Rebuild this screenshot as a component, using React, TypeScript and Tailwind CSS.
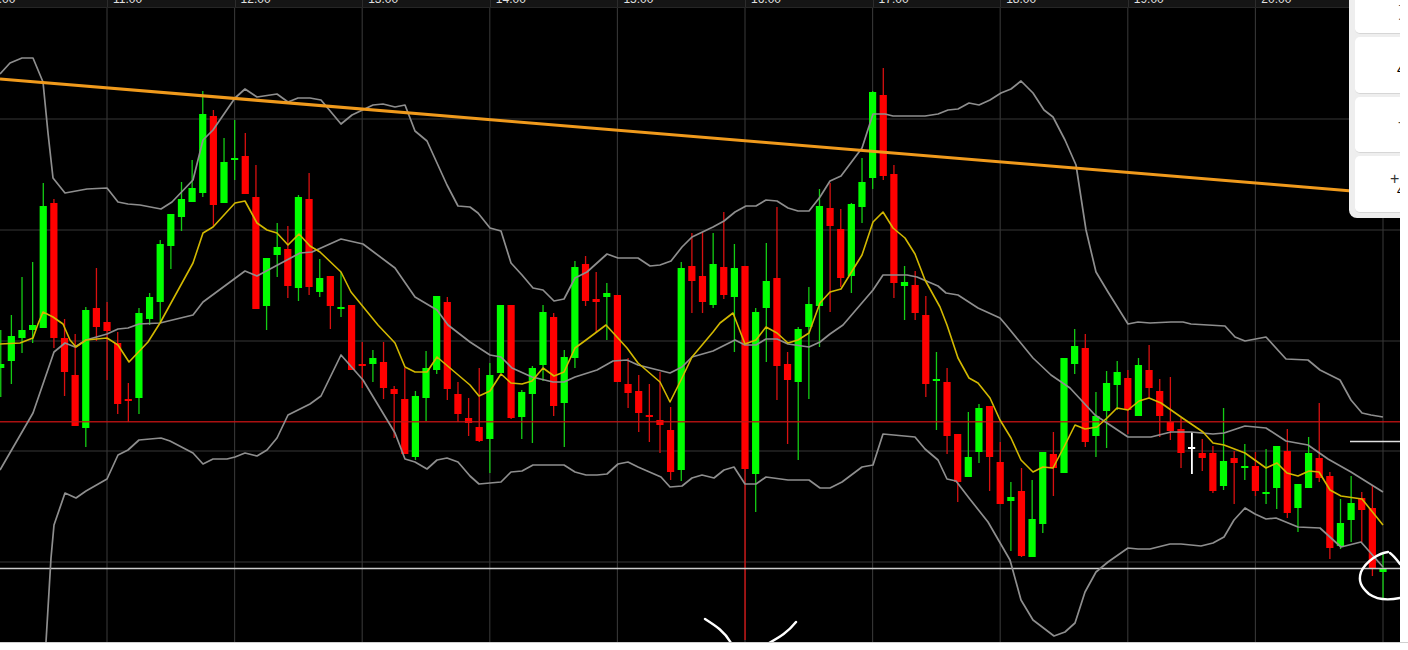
const HOURS = ['10:00', '11:00', '12:00', '13:00', '14:00', '15:00', '16:00', '17:00', '18:00', '19:00', '20:00'];

const STEP = 10.633;
const X0 = 0.7;

// high, body top, body bottom, low, colour (one entry per 5 min bar)
type Bar = [number, number, number, number, 'g' | 'r' | 'w'];
const BARS: Bar[] = [
  [330, 364, 368, 397, 'g'], [315, 336, 361, 384, 'g'], [277, 330, 338, 353, 'g'], [262, 325, 330, 343, 'g'],
  [183, 206, 328, 328, 'g'], [199, 203, 338, 348, 'r'], [319, 338, 372, 396, 'r'], [334, 375, 426, 426, 'r'],
  [307, 310, 428, 447, 'g'], [268, 308, 327, 341, 'r'], [302, 322, 331, 380, 'r'], [332, 343, 404, 414, 'r'],
  [383, 399, 401, 422, 'r'], [308, 313, 398, 414, 'g'], [293, 297, 319, 325, 'g'], [240, 244, 302, 322, 'g'],
  [214, 214, 246, 269, 'g'], [182, 199, 217, 231, 'g'], [160, 188, 202, 202, 'g'], [91, 114, 193, 197, 'g'],
  [110, 116, 205, 227, 'r'], [138, 162, 203, 203, 'g'], [120, 158, 160, 180, 'g'], [133, 156, 194, 194, 'r'],
  [165, 197, 309, 309, 'r'], [258, 258, 306, 330, 'g'], [223, 247, 255, 277, 'g'], [226, 249, 286, 298, 'r'],
  [195, 197, 288, 301, 'g'], [173, 199, 287, 295, 'r'], [259, 278, 292, 297, 'g'], [276, 276, 306, 329, 'r'],
  [272, 307, 309, 317, 'g'], [305, 305, 370, 370, 'r'], [342, 364, 366, 388, 'r'], [350, 358, 364, 382, 'g'],
  [342, 362, 388, 399, 'r'], [386, 389, 394, 438, 'r'], [368, 399, 454, 454, 'r'], [391, 396, 457, 460, 'g'],
  [351, 368, 398, 421, 'g'], [296, 296, 370, 374, 'g'], [297, 302, 389, 400, 'r'], [382, 394, 414, 422, 'r'],
  [398, 418, 423, 436, 'r'], [368, 427, 441, 442, 'r'], [363, 375, 439, 473, 'g'], [305, 305, 373, 373, 'g'],
  [305, 305, 418, 419, 'r'], [390, 392, 417, 439, 'g'], [366, 368, 394, 443, 'g'], [305, 312, 365, 381, 'g'],
  [313, 317, 406, 416, 'r'], [350, 357, 403, 447, 'g'], [261, 267, 358, 368, 'g'], [256, 264, 301, 306, 'r'],
  [272, 299, 302, 332, 'r'], [283, 293, 297, 340, 'g'], [295, 295, 382, 382, 'r'], [358, 384, 393, 408, 'r'],
  [375, 391, 413, 432, 'r'], [384, 415, 417, 442, 'r'], [372, 420, 425, 453, 'r'], [407, 430, 472, 480, 'r'],
  [262, 268, 470, 481, 'g'], [233, 266, 281, 313, 'r'], [232, 276, 302, 313, 'r'], [233, 264, 305, 308, 'g'],
  [212, 267, 295, 299, 'r'], [244, 268, 297, 352, 'g'], [266, 266, 469, 640, 'r'], [308, 312, 474, 512, 'g'],
  [243, 281, 308, 362, 'g'], [207, 278, 366, 400, 'r'], [352, 364, 380, 444, 'r'], [327, 329, 382, 460, 'g'],
  [287, 304, 327, 399, 'g'], [189, 206, 306, 347, 'g'], [183, 208, 226, 312, 'r'], [209, 229, 278, 287, 'r'],
  [203, 204, 276, 293, 'g'], [158, 182, 207, 223, 'g'], [91, 92, 178, 189, 'g'], [68, 95, 176, 180, 'r'],
  [165, 174, 283, 298, 'r'], [266, 282, 286, 320, 'g'], [271, 285, 313, 320, 'r'], [296, 315, 384, 397, 'r'],
  [352, 379, 381, 430, 'g'], [368, 382, 436, 454, 'r'], [434, 434, 482, 502, 'r'], [412, 457, 477, 477, 'g'],
  [404, 408, 452, 463, 'g'], [406, 406, 457, 491, 'r'], [442, 462, 504, 504, 'r'], [482, 497, 501, 551, 'g'],
  [468, 491, 556, 557, 'r'], [480, 519, 557, 557, 'g'], [452, 452, 524, 533, 'g'], [432, 454, 468, 496, 'r'],
  [358, 358, 473, 473, 'g'], [329, 346, 364, 374, 'g'], [334, 348, 442, 447, 'r'], [392, 416, 436, 457, 'g'],
  [371, 383, 411, 448, 'g'], [361, 372, 385, 410, 'g'], [370, 378, 410, 434, 'r'], [358, 365, 416, 416, 'g'],
  [345, 370, 388, 398, 'r'], [379, 391, 416, 437, 'r'], [377, 422, 431, 440, 'r'], [418, 429, 453, 468, 'r'],
  [432, 447, 449, 474, 'w'], [439, 453, 458, 471, 'r'], [446, 453, 491, 493, 'r'], [408, 461, 486, 490, 'g'],
  [451, 458, 463, 504, 'r'], [444, 466, 468, 480, 'g'], [452, 466, 491, 496, 'r'], [449, 492, 494, 504, 'g'],
  [446, 446, 488, 509, 'g'], [429, 451, 513, 518, 'r'], [484, 484, 508, 532, 'g'], [437, 453, 488, 488, 'g'],
  [403, 458, 478, 482, 'r'], [472, 476, 548, 559, 'r'], [499, 523, 546, 549, 'g'], [476, 503, 520, 542, 'g'],
  [492, 498, 510, 542, 'r'], [485, 508, 568, 576, 'r'], [552, 569, 572, 600, 'g'],
];

const UPPER =
  '0,74 10,63 22,58 33,58 43,82 48,133 53,178 65,193 87,189 107,188 118,202 128,204 140,205 161,209 172,202 193,180 203,140 213,130 235,98 245,89 257,97 277,94 288,102 298,98 310,98 321,100 341,124 352,115 373,105 383,104 395,107 405,105 415,131 427,141 447,185 458,206 470,207 478,213 490,228 501,231 511,263 522,275 533,288 543,290 554,301 564,299 575,278 587,272 607,254 618,258 638,258 650,266 660,265 671,261 682,247 692,237 713,227 724,221 735,212 746,206 756,206 766,200 777,201 788,208 798,211 809,211 820,197 830,181 841,176 862,148 873,114 885,114 893,116 925,116 938,114 948,110 958,109 969,103 979,105 990,100 1001,93 1011,89 1021,81 1033,93 1044,110 1053,117 1065,140 1076,165 1086,230 1096,272 1108,292 1128,324 1138,322 1150,323 1171,322 1183,322 1191,324 1225,326 1235,337 1245,341 1266,337 1286,359 1308,360 1320,370 1340,380 1351,400 1362,413 1371,415 1383,417';
const MIDDLE =
  '0,470 33,413 54,352 65,343 75,347 86,340 107,334 118,329 128,328 139,324 160,323 193,315 203,302 245,271 257,276 300,253 312,252 341,239 363,244 395,268 415,297 437,310 448,325 470,342 490,355 501,357 512,368 532,377 553,382 564,382 575,377 597,370 613,361 627,360 638,365 670,373 682,367 692,357 713,351 735,340 745,345 756,345 766,339 777,339 788,344 809,347 820,342 830,334 843,325 873,290 883,275 907,275 917,277 938,286 946,293 958,295 978,308 1000,318 1006,325 1033,358 1051,375 1070,388 1095,415 1128,437 1151,437 1171,432 1191,432 1213,434 1224,433 1245,426 1266,428 1286,441 1308,445 1328,459 1351,472 1383,492';
const LOWER =
  '46,642 51,558 54,525 65,493 76,498 86,491 107,479 118,455 128,450 139,440 161,438 170,441 193,453 203,464 213,459 227,459 235,457 245,453 257,456 267,450 277,438 288,415 310,404 321,396 341,355 363,380 395,433 405,459 415,462 427,469 437,460 447,458 458,462 470,476 479,484 501,482 511,472 522,471 533,465 564,465 575,472 586,475 597,475 607,474 618,464 628,462 638,467 661,477 670,487 682,486 692,478 702,475 714,478 724,470 734,467 745,484 756,484 766,477 788,480 809,480 820,488 830,488 842,482 862,467 873,465 883,434 915,437 925,449 938,460 947,479 956,481 969,498 988,522 1010,560 1021,600 1033,620 1054,636 1065,632 1075,623 1085,592 1096,572 1108,562 1128,548 1138,549 1150,549 1170,544 1181,544 1201,546 1213,543 1224,537 1234,520 1245,508 1255,514 1266,519 1276,518 1298,527 1320,528 1341,547 1361,542 1383,567';
const MA =
  '0,344 20,343 33,338 38,324 43,312 53,317 63,324 70,340 76,347 86,340 107,338 118,345 129,362 148,342 160,323 193,263 203,233 213,227 235,203 245,201 257,223 267,230 277,233 288,245 299,234 310,246 320,252 341,272 351,292 378,325 395,343 405,367 415,372 427,372 437,357 470,385 479,396 490,391 501,374 511,383 522,384 532,381 543,368 554,376 564,372 575,348 586,340 606,325 627,348 638,363 660,382 670,402 682,378 692,357 713,332 720,323 733,313 745,344 756,340 766,327 777,333 788,343 798,340 809,333 813,322 820,303 830,292 841,289 862,255 873,222 883,212 893,228 905,238 915,254 925,280 940,307 947,325 958,358 969,378 978,383 990,398 1000,420 1011,438 1021,460 1033,472 1043,467 1053,468 1065,445 1075,425 1085,429 1097,427 1107,418 1117,408 1128,410 1139,401 1149,398 1161,403 1181,417 1203,432 1213,443 1224,445 1245,453 1266,468 1277,463 1287,473 1298,476 1309,471 1319,472 1330,490 1341,496 1362,499 1383,525';

const BODY = { g: '#00ff00', r: '#ff0000', w: '#ffffff' };
const WICK = { g: '#14cc14', r: '#d81010', w: '#ffffff' };

function Chart() {
  return (
    <svg className="block w-[1400px] h-[634px] blur-[0.35px]" viewBox="0 8 1400 634">
      {[119, 230, 341, 451, 562].map(y => (
        <line key={y} x1="0" x2="1400" y1={y} y2={y} stroke="#363636" strokeWidth="1.1" />
      ))}
      {HOURS.map((h, i) => {
        const x = 107 + 127.6 * i;
        return <line key={h} x1={x} x2={x} y1="8" y2="642" stroke="#363636" strokeWidth="1.1" />;
      })}

      {BARS.map(([high, top, bottom, low, c], i) => {
        const x = X0 + STEP * i;
        return (
          <g key={i}>
            <rect x={x - 0.6} y={high} width={c === 'w' ? 1.8 : 1.3} height={low - high} fill={WICK[c]} />
            <rect x={x - 3.6} y={top} width="7.2" height={bottom - top} fill={BODY[c]} />
          </g>
        );
      })}

      <line x1="0" x2="1400" y1="421.8" y2="421.8" stroke="#c81414" strokeWidth="1.5" opacity="0.85" />
      <line x1="0" x2="1400" y1="568.5" y2="568.5" stroke="#cccccc" strokeWidth="1.6" />

      <g fill="none" stroke="#8e8e8e" strokeWidth="1.7" strokeLinejoin="round">
        <polyline points={UPPER} />
        <polyline points={MIDDLE} />
        <polyline points={LOWER} />
      </g>
      <polyline points={MA} fill="none" stroke="#d2b800" strokeWidth="1.6" strokeLinejoin="round" />
      <line x1="0" y1="79" x2="1400" y2="195" stroke="#f09a1c" strokeWidth="3" />

      {/* hand drawn marks */}
      <g fill="none" stroke="#ffffff" strokeWidth="2.4" strokeLinecap="round">
        <path d="M705 619 C716 626 724 631 731 643" />
        <path d="M796 622 C788 632 780 637 769 643" />
        <path d="M1388 552 C1379 553 1366 561 1361 572 C1358 581 1361 587 1369 594 C1376 599 1386 601 1400 598" />
        <path d="M1390 553 C1394 556 1397 560 1400 564" />
      </g>
      <line x1="1350" x2="1400" y1="441.5" y2="441.5" stroke="#e0e0e0" strokeWidth="1.6" />
    </svg>
  );
}

function SidePanel() {
  return (
    <div className="absolute top-0 left-[1349px] w-[80px] h-[218px] rounded-bl-[8px] bg-[#eeeeee] pl-[6px] pb-[5px] flex flex-col gap-[3px] font-['Liberation_Sans',sans-serif] text-black">
      <div className="h-[34px] rounded-bl-[5px] bg-white border-b border-[#d6d6d6] pl-[43px] text-[13px] leading-[14px] text-[#555555]">
        <div className="-mt-[5px]">1</div>
        <div>.</div>
      </div>
      <div className="h-[57px] rounded-l-[5px] bg-white border-b border-[#d6d6d6] pl-[42px] pt-[24px] text-[14px] leading-[16px]">4</div>
      <div className="h-[56px] rounded-l-[5px] bg-white border-b border-[#d6d6d6] pl-[43px] pt-[17px] text-[14px] leading-[16px] text-[#444444]">-</div>
      <div className="h-[57px] rounded-l-[5px] bg-white border-b border-[#d6d6d6] pl-[35px] pt-[15px] text-[16px] leading-[16px]">
        <div className="text-[#333333]">+</div>
        <div className="pl-[7px] -mt-[2px] text-[12px] leading-[12px]">4</div>
      </div>
    </div>
  );
}

export default function App() {
  return (
    <div className="w-[1408px] h-[650px] bg-white overflow-hidden">
      <div className="relative w-[1400px] h-[642px] bg-black overflow-hidden">
        {/* time axis, cut off by the top of the screenshot */}
        <div className="h-[8px] bg-[#151515] border-b border-[#262626] overflow-hidden">
          <div className="flex -ml-[20.6px] font-['Liberation_Sans',sans-serif] text-[12px] leading-[12px] text-[#e0e0e0]">
            {HOURS.map(h => (
              <div key={h} className="w-[127.6px] shrink-0 h-[8px] border-l border-[#2c2c2c] pl-[5px]">
                <div className="-mt-[7px]">{h}</div>
              </div>
            ))}
          </div>
        </div>
        <Chart />
        <SidePanel />
      </div>
      <div className="h-px bg-[#d0d0d0]" />
    </div>
  );
}
